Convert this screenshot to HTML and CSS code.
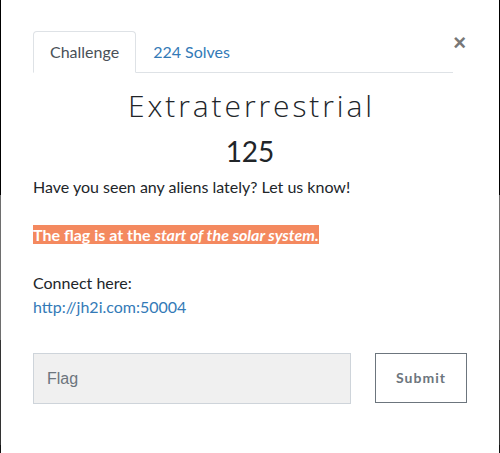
FILE: index.html
```html
<!DOCTYPE html>
<html>
<head>
<meta charset="utf-8">
<link rel="stylesheet" href="styles.css">
</head>
<body>
<div class="modal">
  <div class="header">
    <ul class="tabs">
      <li class="tab active">Challenge</li>
      <li class="tab">224 Solves</li>
    </ul>
    <span class="close">&times;</span>
  </div>
  <h2 class="title">Extraterrestrial</h2>
  <h3 class="points">125</h3>
  <div class="desc">
    <p>Have you seen any aliens lately? Let us know!</p>
    <p><strong class="hl">The flag is at the <em>start of the solar system.</em></strong></p>
    <p class="last">Connect here:<br><a href="#" class="link">http://jh2i.com:50004</a></p>
  </div>
  <div class="form">
    <div class="input">Flag</div>
    <div class="btn">Submit</div>
  </div>
</div>
</body>
</html>
```
FILE: styles.css
```css
html, body {
  margin: 0;
  padding: 0;
}
body {
  width: 500px;
  height: 453px;
  overflow: hidden;
  background: linear-gradient(to bottom, #000 0, #000 195px, #6e6e6e 195px, #6e6e6e 340px, #333 340px, #333 445px, #111 445px);
  font-family: Lato, "Noto Sans", sans-serif;
  color: #212529;
}
.modal {
  margin: 0 1px;
  height: 453px;
  background: #fff;
  box-sizing: border-box;
  padding: 31px 32px 0 32px;
}
.header {
  display: flex;
  align-items: flex-start;
}
.tabs {
  list-style: none;
  margin: 0;
  padding: 0;
  display: flex;
  width: 420px;
  border-bottom: 1px solid #dee2e6;
}
.tab {
  font-size: 16px;
  line-height: 24px;
  padding: 8px 16px;
  border: 1px solid transparent;
  border-top-left-radius: 4px;
  border-top-right-radius: 4px;
  margin-bottom: -1px;
  color: #337ab7;
}
.tab.active {
  color: #495057;
  border-color: #dee2e6 #dee2e6 #fff;
  background: #fff;
}
.close {
  margin-left: auto;
  margin-right: 1px;
  margin-top: 1px;
  font-size: 22px;
  font-weight: 700;
  line-height: 22px;
  color: #777;
  font-family: "Liberation Sans", Arial, sans-serif;
}
.title {
  margin: 13px 0 0;
  padding-left: 3px;
  text-align: center;
  font-family: "Open Sans", Lato, sans-serif;
  font-weight: 300;
  font-size: 30px;
  line-height: 40px;
  letter-spacing: 2.9px;
  color: #212529;
}
.points {
  margin: 8px 0 0;
  text-align: center;
  font-weight: 400;
  font-size: 28px;
  line-height: 34px;
  color: #212529;
}
.desc {
  margin-top: 7px;
  font-size: 16px;
  line-height: 24px;
}
.desc p {
  margin: 0 0 24px;
}
.desc p.last {
  margin-bottom: 0;
}
.hl {
  background: #f4895f;
  color: #fff;
  font-weight: 700;
}
.link {
  color: #337ab7;
  text-decoration: none;
}
.form {
  display: flex;
  align-items: flex-start;
  margin-top: 34px;
}
.input {
  width: 318px;
  height: 51px;
  box-sizing: border-box;
  background: #f0f0f0;
  border: 1px solid #ced4da;
  padding: 0 13px;
  font-family: "Liberation Sans", Arial, sans-serif;
  font-size: 16px;
  line-height: 49px;
  color: #6c757d;
}
.btn {
  margin-left: 24px;
  width: 92px;
  height: 50px;
  box-sizing: border-box;
  border: 1px solid #6c757d;
  text-align: center;
  font-size: 14px;
  font-weight: 700;
  letter-spacing: 1px;
  line-height: 48px;
  color: #6c757d;
}
```
